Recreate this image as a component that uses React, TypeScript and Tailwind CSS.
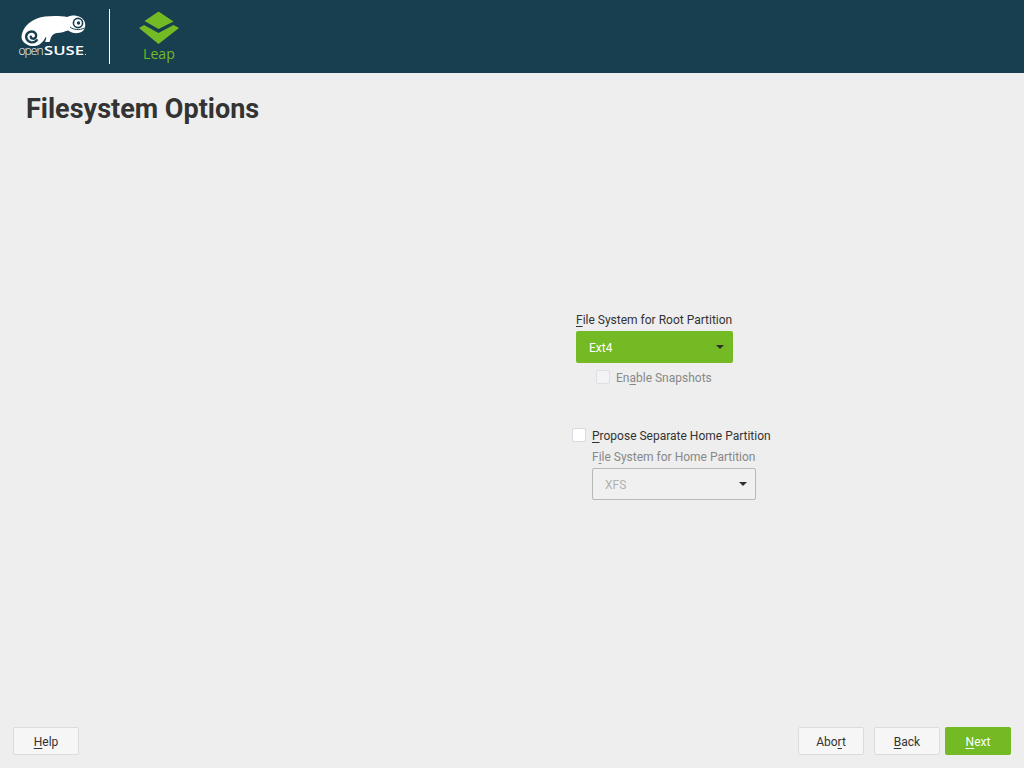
import React from "react";

function Caret() {
  return (
    <svg width="8" height="4" viewBox="0 0 8 4">
      <path d="M0 0h8L4 4z" fill="#2e2e2e" />
    </svg>
  );
}

function Logos() {
  return (
    <svg width="200" height="73" viewBox="0 0 200 73" className="shrink-0">
      <path
        d="M21.5 37C22 29 28 22 37 18.5C45 15.5 58 15.5 67.5 17C71 15 76 15 80 17C84 19 86 23 85 27C84.5 30 82 32.5 78 33C74.5 33.5 71 32.5 68 30.5C64.5 31.5 61 33 57 33C54 33.5 52 35 51 37.5L49.5 42L45 42C46 40 46.5 38 46 36.5C44.5 39.5 42.5 42.5 39.5 44.5C35.5 46.5 30.5 46.5 27 44.5C23.5 42.5 21.5 40 21.5 37Z"
        fill="#ffffff"
      />
      <path
        d="M36.8 40.2C34 43.5 28.5 43 26.7 39C25 35 27.8 31.5 31.5 31.5C35 31.5 37.3 34.8 35.8 37.3C34.3 39.5 31 39 30.8 36.6"
        fill="none"
        stroke="#173f4f"
        strokeWidth="2.4"
        strokeLinecap="round"
      />
      <circle cx="78" cy="23" r="5.4" fill="#173f4f" />
      <circle cx="78" cy="23" r="3.8" fill="#ffffff" />
      <circle cx="78.5" cy="23" r="1.7" fill="#173f4f" />
      <path d="M70 27C74 30 79 30.5 84.5 28" fill="none" stroke="#173f4f" strokeWidth="1" />
      <text x="18.5" y="55" fill="#ffffff" fontFamily="Open Sans, sans-serif" fontSize="12" fontWeight="300" textLength="25">
        open
      </text>
      <text x="44" y="55" fill="#ffffff" fontFamily="Open Sans, sans-serif" fontSize="13" fontWeight="600" textLength="40" lengthAdjust="spacingAndGlyphs">
        SUSE
      </text>
      <circle cx="85.5" cy="54.5" r="0.5" fill="#ffffff" />
      <rect x="109" y="9" width="1" height="55" fill="#ffffff" />
      <path d="M158.5 11.5L173.5 21.5L158.5 29L144.5 21Z" fill="#73ba25" />
      <path d="M139 28L144 25L158.5 33L173.5 25L179 28L158.5 44Z" fill="#73ba25" />
      <text x="143" y="58.5" fill="#73ba25" fontFamily="Open Sans, sans-serif" fontSize="14.2">
        Leap
      </text>
    </svg>
  );
}

function Btn({ green, children }: { green?: boolean; children: React.ReactNode }) {
  return (
    <button
      className={
        green
          ? "h-[28px] w-[66px] rounded-[2px] bg-[#73ba25] pt-[1px] text-[12px] text-white"
          : "h-[28px] w-[66px] rounded-[2px] border border-[#dcdcdc] bg-[#f6f6f6] pt-[1px] text-[12px] text-[#333333]"
      }
    >
      {children}
    </button>
  );
}

export default function App() {
  return (
    <div className="flex h-[768px] w-[1024px] flex-col overflow-hidden bg-[#eeeeee] font-['Roboto',sans-serif] text-[12px] text-[#333333]">
      <header className="h-[73px] shrink-0 bg-[#173f4f]">
        <Logos />
      </header>

      <main className="flex-1">
        <h1 className="ml-[26px] mt-[20px] text-[27px] font-bold leading-[33px] text-[#333333]">Filesystem Options</h1>

        <section className="ml-[572px] mt-[186px] flex w-[200px] flex-col">
          <label className="ml-[4px] leading-[16px]">
            <u className="underline-offset-2">F</u>ile System for Root Partition
          </label>
          <div className="ml-[4px] mt-[3px] flex h-[32px] w-[157px] items-center justify-between rounded-[2px] bg-[#73ba25] pl-[13px] pr-[9px] text-white">
            <span className="pt-[2px]">Ext4</span>
            <Caret />
          </div>
          <div className="ml-[24px] mt-[7px] flex h-[14px] items-center gap-[6px] text-[#888888]">
            <span className="h-[14px] w-[14px] rounded-[2px] border border-[#dedee6] bg-[#f3f3f5]" />
            <span className="pt-[2px]">
              En<u className="underline-offset-2">a</u>ble Snapshots
            </span>
          </div>

          <div className="mt-[44px] flex h-[14px] items-center gap-[6px]">
            <span className="h-[14px] w-[14px] rounded-[2px] border border-[#d8d8e0] bg-white" />
            <span className="whitespace-nowrap pt-[2px]">
              <u className="underline-offset-2">P</u>ropose Separate Home Partition
            </span>
          </div>
          <label className="ml-[20px] mt-[7px] whitespace-nowrap leading-[16px] text-[#888888]">
            F<u className="underline-offset-2">i</u>le System for Home Partition
          </label>
          <div className="ml-[20px] mt-[3px] flex h-[32px] w-[164px] items-center justify-between rounded-[2px] border border-[#b8b8b8] bg-[#f0f0f0] pl-[12px] pr-[8px] text-[#b0b0b0]">
            <span className="pt-[2px]">XFS</span>
            <Caret />
          </div>
        </section>
      </main>

      <footer className="flex h-[41px] shrink-0 items-start px-[13px]">
        <Btn>
          <u className="underline-offset-2">H</u>elp
        </Btn>
        <div className="ml-auto flex">
          <Btn>
            Abo<u className="underline-offset-2">r</u>t
          </Btn>
          <div className="ml-[10px]">
            <Btn>
              <u className="underline-offset-2">B</u>ack
            </Btn>
          </div>
          <div className="ml-[5px]">
            <Btn green>
              <u className="underline-offset-2">N</u>ext
            </Btn>
          </div>
        </div>
      </footer>
    </div>
  );
}
